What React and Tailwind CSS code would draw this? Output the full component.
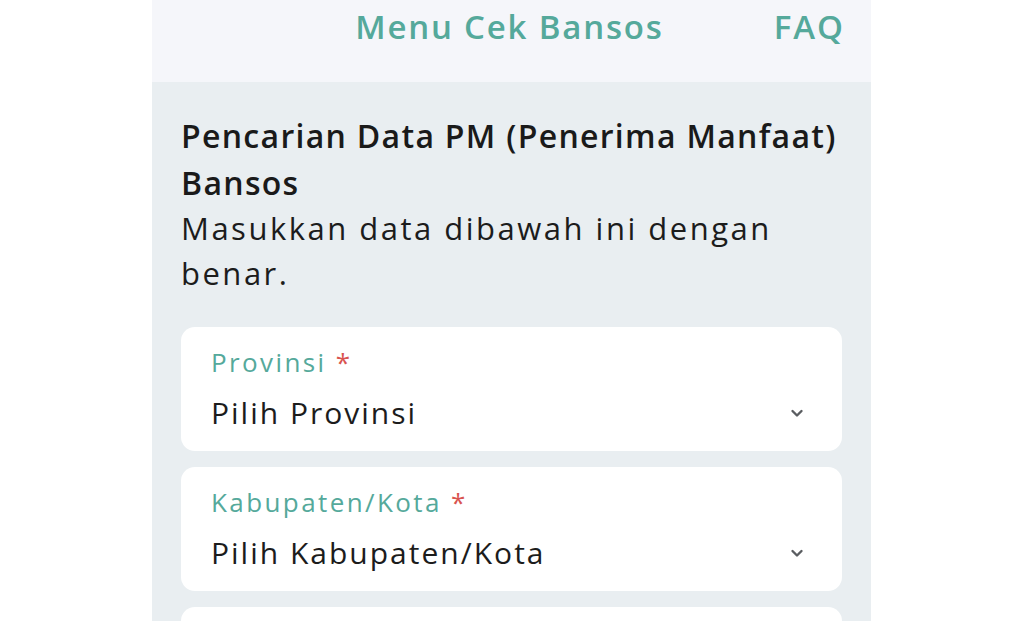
import React from "react";

function Chevron() {
  return (
    <svg width="14" height="9" viewBox="0 0 14 9" fill="none" className="shrink-0">
      <path d="M2.5 2l4.5 4.5 4.5-4.5" stroke="#5a5d61" strokeWidth="2.4" strokeLinecap="round" strokeLinejoin="round" />
    </svg>
  );
}

function SelectCard({ label, value }) {
  return (
    <div className="bg-white rounded-[14px] h-[124px] pl-[30px] pr-[38px] pt-[17px] flex flex-col shrink-0">
      <div className="text-[26px] leading-[36px] font-medium tracking-[2.4px] text-[#55a99b]">
        {label} <span className="text-[#d9534f]">*</span>
      </div>
      <div className="flex items-center justify-between mt-[10px] h-[46px]">
        <span className="text-[30px] leading-[46px] tracking-[2px] text-[#1c1c1c]">{value}</span>
        <Chevron />
      </div>
    </div>
  );
}

export default function App() {
  return (
    <div className="w-full h-[621px] bg-white overflow-hidden pl-[152px]" style={{ fontFamily: '"Open Sans", "Noto Sans", sans-serif' }}>
      <div className="w-[719px] h-full flex flex-col">
        <header className="h-[82px] bg-[#f5f6fa] flex justify-end items-start gap-[110px] pr-[26px] pt-[6px] shrink-0">
          <span className="text-[33px] leading-[42px] font-semibold tracking-[1.8px] text-[#55a99b]">Menu Cek Bansos</span>
          <span className="text-[33px] leading-[42px] font-semibold tracking-[2px] text-[#55a99b]">FAQ</span>
        </header>
        <main className="flex-1 bg-[#e9eef1] px-[29px] pt-[30px] flex flex-col">
          <h1 className="text-[32px] leading-[47px] font-semibold tracking-[1.3px] text-[#1a1a1a]">
            Pencarian Data PM (Penerima Manfaat) Bansos
          </h1>
          <p className="text-[31px] leading-[45px] tracking-[2.5px] text-[#1c1c1c]">
            Masukkan data dibawah ini dengan benar.
          </p>
          <div className="mt-[31px] flex flex-col gap-[16px]">
            <SelectCard label="Provinsi" value="Pilih Provinsi" />
            <SelectCard label="Kabupaten/Kota" value="Pilih Kabupaten/Kota" />
            <div className="bg-white rounded-[14px] h-[124px] shrink-0" />
          </div>
        </main>
      </div>
    </div>
  );
}
